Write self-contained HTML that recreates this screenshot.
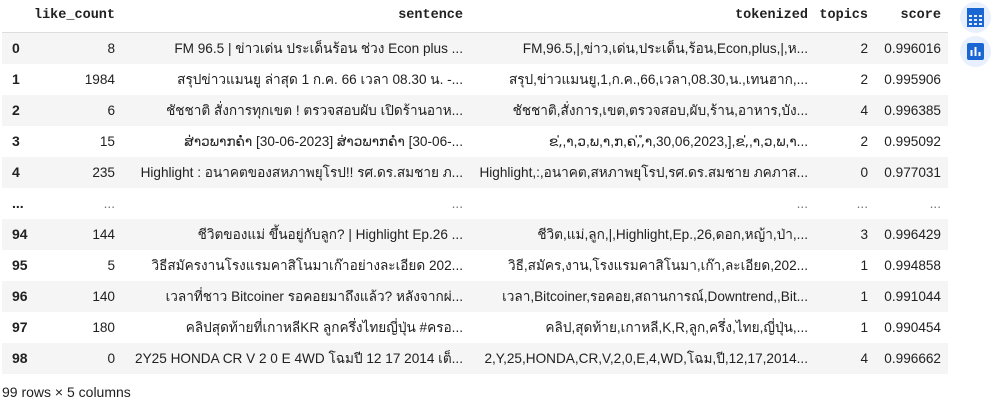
<!DOCTYPE html>
<html><head><meta charset="utf-8"><style>
body{margin:0;background:#fff;width:994px;height:405px;overflow:hidden;font-family:"Liberation Sans","DejaVu Sans",sans-serif;font-size:13.6px;color:#212121;position:relative}
.row{position:absolute;left:2px;width:946px;height:31px}
.g{background:#f5f5f5}
.c{position:absolute;top:0;height:31px;line-height:31px;display:flex;justify-content:flex-end;overflow:hidden;white-space:nowrap}
.i{position:absolute;left:10px;top:0;line-height:31px;font-weight:bold;font-size:14px}
.h .c{font-family:"Liberation Mono",monospace;font-weight:bold;font-size:13.5px;line-height:32px;height:32px}
.hdr{position:absolute;left:2px;top:0;width:946px;height:32px;border-bottom:1px solid #ddd}
.c1{left:20px;width:93px}
.c2{left:122px;width:339px}
.c3{left:468px;width:338px}
.c4{left:810px;width:56px}
.c5{left:870px;width:69px}
.dots{color:#777}
.btn{position:absolute;left:960px;width:31px;height:31px;border-radius:50%;background:#e8f0fe}
.cap{position:absolute;left:2px;top:384px;font-size:14px;color:#212121}
</style></head><body>
<div class="hdr h">
<div class="c c1">like_count</div><div class="c c2">sentence</div><div class="c c3">tokenized</div><div class="c c4">topics</div><div class="c c5">score</div>
</div>

<div class="row g" style="top:33px"><span class="i">0</span><div class="c c1">8</div><div class="c c2">FM 96.5 | ข่าวเด่น ประเด็นร้อน ช่วง Econ plus ...</div><div class="c c3">FM,96.5,|,ข่าว,เด่น,ประเด็น,ร้อน,Econ,plus,|,ห...</div><div class="c c4">2</div><div class="c c5">0.996016</div></div>
<div class="row" style="top:64px"><span class="i">1</span><div class="c c1">1984</div><div class="c c2">สรุปข่าวแมนยู ล่าสุด 1 ก.ค. 66 เวลา 08.30 น. -...</div><div class="c c3">สรุป,ข่าวแมนยู,1,ก.ค.,66,เวลา,08.30,น.,เทนฮาก,...</div><div class="c c4">2</div><div class="c c5">0.995906</div></div>
<div class="row g" style="top:95px"><span class="i">2</span><div class="c c1">6</div><div class="c c2">ชัชชาติ สั่งการทุกเขต ! ตรวจสอบผับ เปิดร้านอาห...</div><div class="c c3">ชัชชาติ,สั่งการ,เขต,ตรวจสอบ,ผับ,ร้าน,อาหาร,บัง...</div><div class="c c4">4</div><div class="c c5">0.996385</div></div>
<div class="row" style="top:126px"><span class="i">3</span><div class="c c1">15</div><div class="c c2">ສ່າວພາກຄ່ຳ [30-06-2023] ສ່າວພາກຄ່ຳ [30-06-...</div><div class="c c3">ຂ,່,າ,ວ,ພ,າ,ກ,ຄ,່,ຳ,30,06,2023,],ຂ,່,າ,ວ,ພ,າ...</div><div class="c c4">2</div><div class="c c5">0.995092</div></div>
<div class="row g" style="top:157px"><span class="i">4</span><div class="c c1">235</div><div class="c c2">Highlight : อนาคตของสหภาพยุโรป!! รศ.ดร.สมชาย ภ...</div><div class="c c3">Highlight,:,อนาคต,สหภาพยุโรป,รศ.ดร.สมชาย ภคภาส...</div><div class="c c4">0</div><div class="c c5">0.977031</div></div>
<div class="row" style="top:188px"><span class="i">...</span><div class="c c1 dots">...</div><div class="c c2 dots">...</div><div class="c c3 dots">...</div><div class="c c4 dots">...</div><div class="c c5 dots">...</div></div>
<div class="row g" style="top:219px"><span class="i">94</span><div class="c c1">144</div><div class="c c2">ชีวิตของแม่ ขึ้นอยู่กับลูก? | Highlight Ep.26 ...</div><div class="c c3">ชีวิต,แม่,ลูก,|,Highlight,Ep.,26,ดอก,หญ้า,ป่า,...</div><div class="c c4">3</div><div class="c c5">0.996429</div></div>
<div class="row" style="top:250px"><span class="i">95</span><div class="c c1">5</div><div class="c c2">วิธีสมัครงานโรงแรมคาสิโนมาเก๊าอย่างละเอียด 202...</div><div class="c c3">วิธี,สมัคร,งาน,โรงแรมคาสิโนมา,เก๊า,ละเอียด,202...</div><div class="c c4">1</div><div class="c c5">0.994858</div></div>
<div class="row g" style="top:281px"><span class="i">96</span><div class="c c1">140</div><div class="c c2">เวลาที่ชาว Bitcoiner รอคอยมาถึงแล้ว? หลังจากผ่...</div><div class="c c3">เวลา,Bitcoiner,รอคอย,สถานการณ์,Downtrend,,Bit...</div><div class="c c4">1</div><div class="c c5">0.991044</div></div>
<div class="row" style="top:312px"><span class="i">97</span><div class="c c1">180</div><div class="c c2">คลิปสุดท้ายที่เกาหลีKR ลูกครึ่งไทยญี่ปุ่น #ครอ...</div><div class="c c3">คลิป,สุดท้าย,เกาหลี,K,R,ลูก,ครึ่ง,ไทย,ญี่ปุ่น,...</div><div class="c c4">1</div><div class="c c5">0.990454</div></div>
<div class="row g" style="top:343px"><span class="i">98</span><div class="c c1">0</div><div class="c c2">2Y25 HONDA CR V 2 0 E 4WD โฉมปี 12 17 2014 เต็...</div><div class="c c3">2,Y,25,HONDA,CR,V,2,0,E,4,WD,โฉม,ปี,12,17,2014...</div><div class="c c4">4</div><div class="c c5">0.996662</div></div>

<div class="cap">99 rows × 5 columns</div>

<div class="btn" style="top:2px">
<svg width="31" height="31" viewBox="0 0 31 31"><g fill="none" stroke="#1a66d2" stroke-width="2"><rect x="8" y="7" width="15" height="17"/><line x1="8" y1="12" x2="23" y2="12"/><line x1="8" y1="16" x2="23" y2="16"/><line x1="8" y1="20" x2="23" y2="20"/><line x1="13" y1="12" x2="13" y2="24"/><line x1="18" y1="12" x2="18" y2="24"/></g><rect x="8" y="7" width="15" height="5" fill="#1a66d2"/></svg>
</div>
<div class="btn" style="top:36px">
<svg width="31" height="31" viewBox="0 0 31 31"><rect x="7" y="7" width="17" height="17" rx="2" fill="#1a66d2"/><rect x="10.5" y="14" width="2" height="6" fill="#fff"/><rect x="14.5" y="11" width="2" height="9" fill="#fff"/><rect x="18.5" y="16" width="2" height="4" fill="#fff"/></svg>
</div>
</body></html>
